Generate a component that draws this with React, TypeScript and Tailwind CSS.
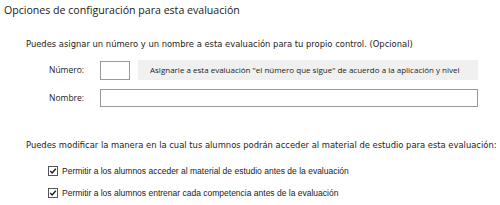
import React from 'react';

const Check = () => (
    <span className="w-[10px] h-[10px] border border-[#555] bg-white flex items-center justify-center shrink-0">
        <svg width="8" height="8" viewBox="0 0 8 8">
            <path d="M1.2 4 L3.2 6 L6.8 1.8" stroke="#222" strokeWidth="1.5" fill="none" />
        </svg>
    </span>
);

export default function App() {
    return (
        <div className="w-[500px] h-[205px] bg-white text-[#222] overflow-hidden">
            <h2 className="pl-1 pt-[2px] text-[10.6px] leading-[16px] font-medium text-[#1a1a1a] font-['Open_Sans',sans-serif]">
                Opciones de configuración para esta evaluación
            </h2>

            <p className="pl-[26px] mt-[19px] text-[8.4px] leading-[14px] whitespace-nowrap font-['DejaVu_Sans',sans-serif]">
                Puedes asignar un número y un nombre a esta evaluación para tu propio control. (Opcional)
            </p>

            <div className="mt-[9px] flex flex-col gap-[9px] font-['Open_Sans',sans-serif] text-[8.5px]">
                <div className="flex items-center">
                    <span className="pl-[49px] w-[100px]">Número:</span>
                    <input className="w-[30px] h-[19px] border border-[#999] outline-none" />
                    <button className="ml-[8px] w-[340px] h-[20px] bg-[#f0f0f0] text-left pl-[12px] text-[8px] whitespace-nowrap">
                        Asignarle a esta evaluación "el número que sigue" de acuerdo a la aplicación y nivel
                    </button>
                </div>
                <div className="flex items-center">
                    <span className="pl-[49px] w-[100px]">Nombre:</span>
                    <input className="w-[378px] h-[18px] border border-[#999] outline-none" />
                </div>
            </div>

            <p className="pl-[26px] mt-[31px] text-[8.4px] leading-[14px] whitespace-nowrap font-['DejaVu_Sans',sans-serif]">
                Puedes modificar la manera en la cual tus alumnos podrán acceder al material de estudio para esta evaluación:
            </p>

            <div className="pl-[48px] mt-[12px] flex flex-col gap-[8px] text-[8.5px] leading-[14px] font-['Liberation_Sans',sans-serif]">
                <label className="flex items-center gap-[4px]">
                    <Check />
                    Permitir a los alumnos acceder al material de estudio antes de la evaluación
                </label>
                <label className="flex items-center gap-[4px]">
                    <Check />
                    Permitir a los alumnos entrenar cada competencia antes de la evaluación
                </label>
            </div>
        </div>
    );
}
